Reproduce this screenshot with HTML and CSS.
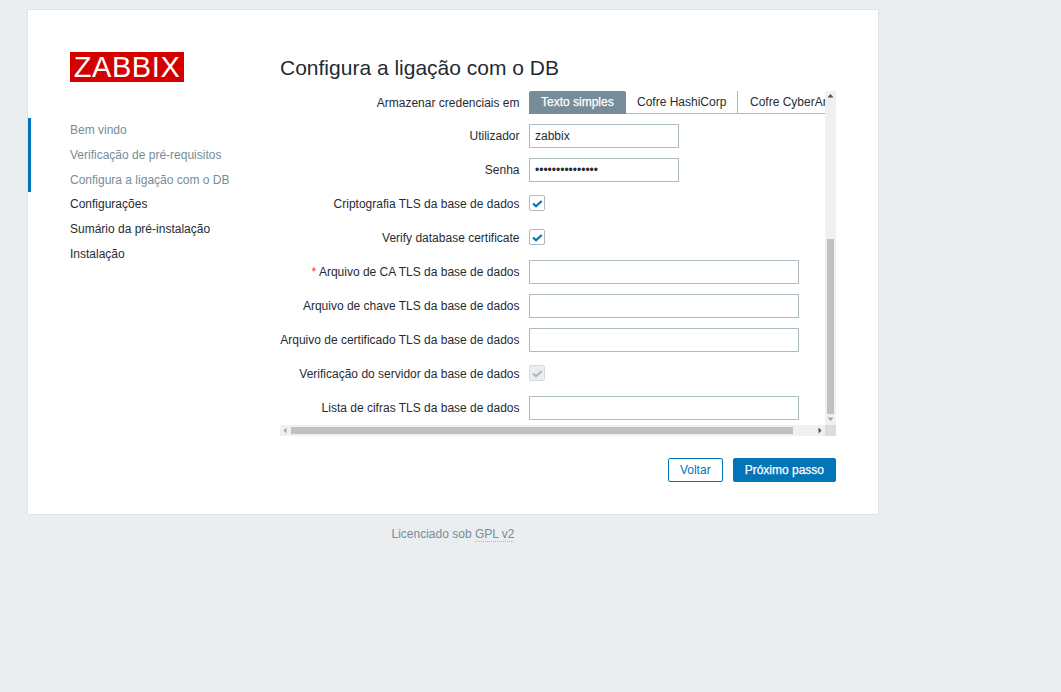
FILE: index.html
```html
<!DOCTYPE html>
<html lang="pt">
<head>
<meta charset="utf-8">
<title>Zabbix</title>
<link rel="stylesheet" href="styles.css">
</head>
<body>
<div class="card">
  <aside class="side">
    <div class="logo">ZABBIX</div>
    <ul class="steps">
      <li class="step done">Bem vindo</li>
      <li class="step done">Verificação de pré-requisitos</li>
      <li class="step done">Configura a ligação com o DB</li>
      <li class="step">Configurações</li>
      <li class="step">Sumário da pré-instalação</li>
      <li class="step">Instalação</li>
    </ul>
  </aside>
  <main class="main">
    <h1 class="title">Configura a ligação com o DB</h1>
    <div class="frame">
      <div class="viewport">
        <div class="row row-tabs">
          <span class="label">Armazenar credenciais em</span>
          <div class="tabs">
            <span class="tab active">Texto simples</span>
            <span class="tab sep">Cofre HashiCorp</span>
            <span class="tab">Cofre CyberArk</span>
          </div>
        </div>
        <div class="row"><label class="label">Utilizador</label><input class="input short" type="text" value="zabbix"></div>
        <div class="row"><label class="label">Senha</label><input class="input short" type="password" value="123456789012345"></div>
        <div class="row"><span class="label">Criptografia TLS da base de dados</span><span class="check"><svg class="tick" viewBox="0 0 14 14"><path d="M3 7.500 6 10.300 11.700 5"/></svg></span></div>
        <div class="row"><span class="label">Verify database certificate</span><span class="check"><svg class="tick" viewBox="0 0 14 14"><path d="M3 7.500 6 10.300 11.700 5"/></svg></span></div>
        <div class="row"><label class="label"><span class="req">*</span> Arquivo de CA TLS da base de dados</label><input class="input long" type="text"></div>
        <div class="row"><label class="label">Arquivo de chave TLS da base de dados</label><input class="input long" type="text"></div>
        <div class="row"><label class="label">Arquivo de certificado TLS da base de dados</label><input class="input long" type="text"></div>
        <div class="row"><span class="label">Verificação do servidor da base de dados</span><span class="check off"><svg class="tick" viewBox="0 0 14 14"><path d="M3 7.500 6 10.300 11.700 5"/></svg></span></div>
        <div class="row"><label class="label">Lista de cifras TLS da base de dados</label><input class="input long" type="text"></div>
      </div>
      <div class="vbar">
        <svg class="arrow" viewBox="0 0 11 11"><path d="M5.500 3 8.500 6.500H2.500z"/></svg>
        <div class="vthumb"></div>
        <svg class="arrow arrow-dim" viewBox="0 0 11 11"><path d="M2.500 3.500h6L5.500 7z"/></svg>
      </div>
      <div class="hbar">
        <svg class="arrow arrow-dim" viewBox="0 0 11 11"><path d="M6.500 2.500v6L3.500 5.500z"/></svg>
        <div class="hthumb"></div>
        <svg class="arrow" viewBox="0 0 11 11"><path d="M4.500 2.500 7.500 5.500 4.500 8.500z"/></svg>
      </div>
      <div class="corner"></div>
    </div>
    <div class="actions">
      <button class="btn alt" type="button">Voltar</button>
      <button class="btn" type="button">Próximo passo</button>
    </div>
  </main>
</div>
<p class="license">Licenciado sob <a class="gpl" href="#">GPL v2</a></p>
</body>
</html>
```
FILE: styles.css
```css
* { box-sizing: border-box; }
html, body { height: 100%; }
body {
  margin: 0;
  padding: 9px 0 0 27px;
  background: #ebeef0;
  color: #1f2c33;
  font: 12px/14px "Liberation Sans", Arial, sans-serif;
}
.card {
  display: flex;
  width: 852px;
  height: 506px;
  background: #fff;
  border: 1px solid #dfe4e7;
}
.side { width: 252px; flex: none; padding-top: 42px; }
.logo {
  margin-left: 42px;
  width: 114px;
  height: 30px;
  background: #d40000;
  color: #fff;
  font-size: 29px;
  line-height: 30px;
  text-align: center;
  letter-spacing: 0.6px;
}
.steps { list-style: none; margin: 36.33px 0 0; padding: 0; }
.step {
  height: 24.67px;
  line-height: 24px;
  padding-left: 42px;
}
.step.done { color: #768d99; border-left: 3px solid #0275b8; padding-left: 39px; }
.main { width: 556px; flex: none; }
.title {
  margin: 0;
  height: 81px;
  padding-top: 45px;
  font-size: 21px;
  line-height: 26px;
  font-weight: 400;
}
.frame {
  display: grid;
  grid-template-columns: 545px 11px;
  grid-template-rows: 334px 11px;
  height: 345px;
}
.viewport { overflow: hidden; display: flex; flex-direction: column; gap: 10px; }
.row { display: flex; align-items: center; gap: 9.500px; height: 24px; flex: none; }
.row-tabs { height: 23px; }
.label { width: 239.500px; flex: none; text-align: right; white-space: nowrap; }
.req { color: #e33734; }
.tabs {
  display: flex;
  flex: none;
  height: 23px;
  border-bottom: 1px solid #acbbc2;
  width: 296px;
}
.tab {
  flex: none;
  padding: 0 11px 0 12px;
  line-height: 22px;
  white-space: nowrap;
}
.tab.active { background: #768d99; color: #fff; border-radius: 2px 2px 0 0; width: 97px; height: 23px; -webkit-text-stroke: 0.25px #fff; }
.tab.sep { border-right: 1px solid #acbbc2; width: 112px; padding-left: 11px; }
.input {
  height: 24px;
  padding: 0 5px;
  border: 1px solid #acbbc2;
  background: #fff;
  color: #1f2c33;
  font: 12px "Liberation Sans", Arial, sans-serif;
  border-radius: 0;
  outline: 0;
}
.short { width: 150px; }
.long { width: 270px; }
.check {
  display: block;
  width: 16px;
  height: 16px;
  margin-bottom: 2px;
  border: 1px solid #acbbc2;
  border-radius: 2px;
  background: #fff;
}
.tick { display: block; width: 14px; height: 14px; fill: none; stroke: #0275b8; stroke-width: 2.200; }
.check.off { background: #ebeef0; border-color: #d5dbde; }
.check.off .tick { stroke: #acbbc2; }
.vbar { display: flex; flex-direction: column; align-items: center; background: #f0f0f0; }
.hbar { display: flex; align-items: center; background: #f0f0f0; }
.arrow { display: block; width: 11px; height: 11px; flex: none; fill: #505050; }
.arrow-dim { fill: #a3a3a3; }
.vthumb { width: 7px; height: 175px; margin-top: 137px; margin-bottom: auto; background: #c1c1c1; }
.hthumb { width: 502px; height: 7px; margin-right: auto; background: #c1c1c1; }
.corner { background: #dcdcdc; }
.actions { display: flex; justify-content: flex-end; gap: 10px; margin-top: 22px; }
.btn {
  height: 24px;
  padding: 0 11px;
  border: 1px solid #0275b8;
  border-radius: 2px;
  background: #0275b8;
  color: #fff;
  font: 12px "Liberation Sans", Arial, sans-serif;
  -webkit-text-stroke: 0.25px #fff;
}
.btn.alt { background: #fff; color: #0275b8; -webkit-text-stroke: 0; }
.license { width: 852px; margin: 12px 0 0; text-align: center; color: #768d99; }
.gpl { color: inherit; text-decoration: none; border-bottom: 1px dotted #acbbc2; }
```
